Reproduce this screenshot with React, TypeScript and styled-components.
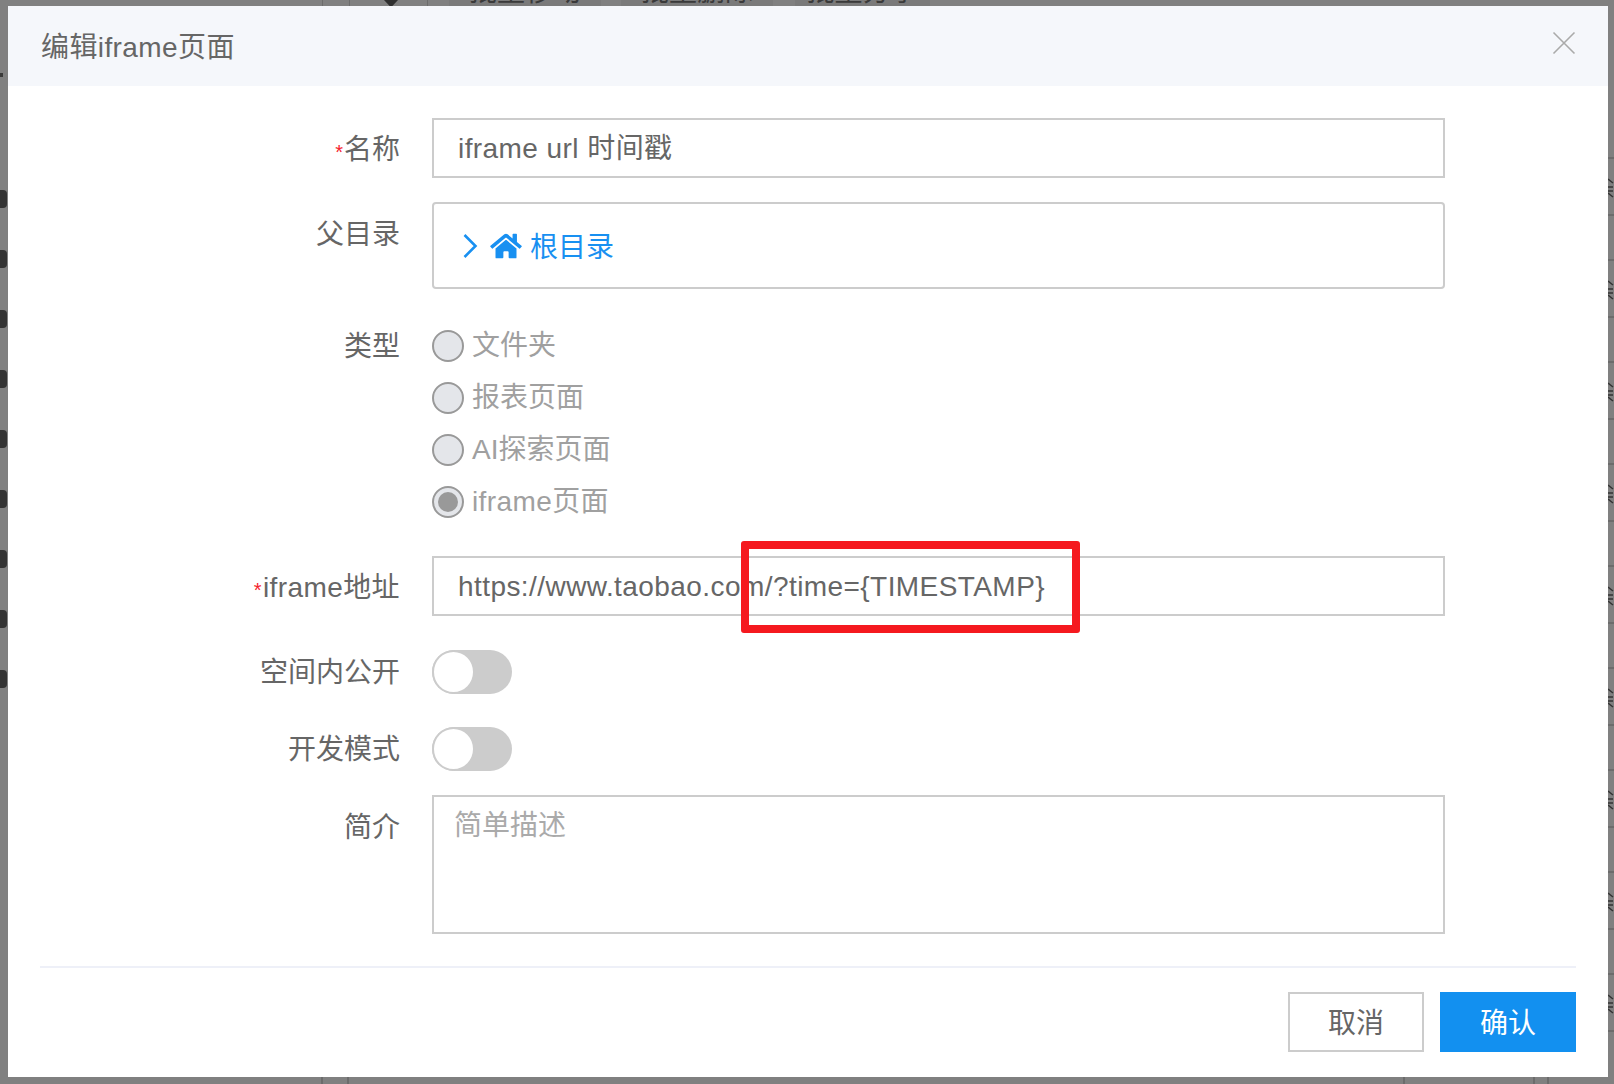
import styled, {createGlobalStyle} from 'styled-components'
import {FaHome} from 'react-icons/fa'

const GlobalStyle = createGlobalStyle`
    html, body {
        margin: 0;
        padding: 0;
        background: #808080;
    }
    * {
        box-sizing: border-box;
    }
    body {
        font-family: "Liberation Sans", "Noto Sans CJK SC", sans-serif;
        overflow: hidden;
    }
`

const types = [
    {label: '文件夹', checked: false},
    {label: '报表页面', checked: false},
    {label: 'AI探索页面', checked: false},
    {label: 'iframe页面', checked: true},
]

const handles = Array.from({length: 9})
const tableRows = Array.from({length: 9})

export default function App() {
    return (
        <Page>
            <GlobalStyle />
            <TopStrip>
                <TopCell $width={323} />
                <TopCell $width={27} />
                <SortCell />
                <ToolButton $left={21} $width={152}>批量移动</ToolButton>
                <ToolButton $left={20} $width={152}>批量删除</ToolButton>
                <ToolButton $left={22} $width={135}>批量分享</ToolButton>
            </TopStrip>
            <Middle>
                <LeftRail>
                    <Tick />
                    {handles.map((_, i) => (
                        <Handle key={i} />
                    ))}
                </LeftRail>
                <Modal>
                    <Header>
                        <Title>编辑iframe页面</Title>
                        <CloseButton aria-label="关闭">
                            <svg width="24" height="24" viewBox="0 0 24 24">
                                <path d="M1.5 1.5 L22.5 22.5 M22.5 1.5 L1.5 22.5" stroke="#aaaaaa" strokeWidth="1.6" fill="none" />
                            </svg>
                        </CloseButton>
                    </Header>
                    <Form>
                        <Row $top={32}>
                            <Label $height={60} $shift={2}><Star>*</Star>名称</Label>
                            <TextInput $up={4} defaultValue="iframe url 时间戳" />
                        </Row>
                        <Row $top={24}>
                            <Label $height={60} $shift={3}>父目录</Label>
                            <TreeBox>
                                <svg width="16" height="26" viewBox="0 0 16 26">
                                    <path d="M2.5 2 L13.5 13 L2.5 24" stroke="#1890f1" strokeWidth="2.6" fill="none" />
                                </svg>
                                <HomeIcon />
                                <TreeText>根目录</TreeText>
                            </TreeBox>
                        </Row>
                        <Row $top={41}>
                            <Label $height={32} $shift={1}>类型</Label>
                            <RadioGroup>
                                {types.map((type) => (
                                    <RadioRow key={type.label}>
                                        <Radio $checked={type.checked} />
                                        <RadioText $latin={type.checked}>{type.label}</RadioText>
                                    </RadioRow>
                                ))}
                            </RadioGroup>
                        </Row>
                        <Row $top={38}>
                            <Label $height={60} $shift={2} $latin><Star>*</Star>iframe地址</Label>
                            <TextInput $up={-2} defaultValue="https://www.taobao.com/?time={TIMESTAMP}" />
                        </Row>
                        <Row $top={34}>
                            <Label $height={44} $shift={1}>空间内公开</Label>
                            <Toggle><Knob /></Toggle>
                        </Row>
                        <Row $top={33}>
                            <Label $height={44} $shift={1}>开发模式</Label>
                            <Toggle><Knob /></Toggle>
                        </Row>
                        <Row $top={24}>
                            <Label $height={60} $shift={3}>简介</Label>
                            <DescInput placeholder="简单描述" />
                        </Row>
                    </Form>
                    <Divider />
                    <Footer>
                        <CancelButton>取消</CancelButton>
                        <ConfirmButton>确认</ConfirmButton>
                    </Footer>
                    <RedMark />
                </Modal>
                <RightRail>
                    {tableRows.map((_, i) => (
                        <TableRow key={i}>
                            <svg width="6" height="20" viewBox="0 0 6 20">
                                <path d="M0 1 L5 5 M0 9 H5 M0 13 H5 M0 15 L5 19" stroke="#333333" strokeWidth="1.5" fill="none" />
                            </svg>
                        </TableRow>
                    ))}
                </RightRail>
            </Middle>
            <BottomStrip>
                <BottomCell $width={323} />
                <BottomCell $width={26} />
                <BottomCell $width={1056} />
                <BottomCell $width={130} />
                <BottomCell $width={14} />
            </BottomStrip>
        </Page>
    )
}

const Page = styled.div`
    width: 1614px;
    height: 1084px;
    display: flex;
    flex-direction: column;
    background: #808080;
    overflow: hidden;
`

const TopStrip = styled.div`
    height: 6px;
    display: flex;
    overflow: hidden;
    flex-shrink: 0;
`

const TopCell = styled.div<{$width: number}>`
    width: ${({$width}) => $width}px;
    height: 6px;
    border-right: 1px solid #6c6c6c;
`

const SortCell = styled.div`
    width: 78px;
    height: 6px;
    border-right: 1px solid #6c6c6c;
    padding-left: 34px;

    &::before {
        content: '';
        display: block;
        width: 14px;
        height: 6px;
        background: #2f2f2f;
        clip-path: polygon(0 0, 100% 0, 60% 100%, 40% 100%);
    }
`

const ToolButton = styled.div<{$left: number; $width: number}>`
    width: ${({$width}) => $width}px;
    margin-left: ${({$left}) => $left}px;
    height: 6px;
    background: #7a7a7a;
    color: #3a3a3a;
    font-size: 28px;
    line-height: 28px;
    display: flex;
    justify-content: center;
    align-items: flex-end;
    white-space: nowrap;
`

const Middle = styled.div`
    height: 1071px;
    display: flex;
    flex-shrink: 0;
`

const LeftRail = styled.div`
    width: 8px;
    height: 100%;
    padding-top: 5px;
    display: flex;
    flex-direction: column;
`

const Tick = styled.div`
    width: 3px;
    height: 4px;
    margin-top: 62px;
    margin-bottom: 113px;
    background: #3a3a3a;
`

const Handle = styled.div`
    width: 7px;
    height: 18px;
    margin-bottom: 42px;
    background: #333333;
    border-radius: 0 4px 4px 0;
`

const Modal = styled.div`
    position: relative;
    width: 1600px;
    height: 100%;
    background: #ffffff;
    display: flex;
    flex-direction: column;
`

const Header = styled.div`
    height: 80px;
    background: #f5f7fb;
    padding: 0 33px;
    display: flex;
    align-items: center;
    justify-content: space-between;
    flex-shrink: 0;
`

const Title = styled.div`
    font-size: 28px;
    color: #666666;
    letter-spacing: 0.4px;
    margin-bottom: 2px;
`

const CloseButton = styled.button`
    border: none;
    background: none;
    padding: 0;
    width: 24px;
    height: 24px;
    margin-right: -1px;
    margin-top: -7px;
    cursor: pointer;
`

const Form = styled.div`
    display: flex;
    flex-direction: column;
`

const Row = styled.div<{$top: number}>`
    display: flex;
    align-items: flex-start;
    gap: 32px;
    margin-top: ${({$top}) => $top}px;
`

const Label = styled.div<{$height: number; $shift: number; $latin?: boolean}>`
    width: 392px;
    height: ${({$height}) => $height}px;
    line-height: ${({$height}) => $height}px;
    padding-top: ${({$shift}) => $shift}px;
    font-size: 28px;
    letter-spacing: ${({$latin}) => ($latin ? '0.4px' : '0')};
    color: #666666;
    text-align: right;
    flex-shrink: 0;
    white-space: nowrap;
`

const Star = styled.span`
    color: #f5222d;
    font-size: 20px;
    margin-right: 1px;
`

const TextInput = styled.input<{$up: number}>`
    width: 1013px;
    height: 60px;
    border: 2px solid #cccccc;
    border-radius: 0;
    padding: ${({$up}) => ($up < 0 ? -$up : 0)}px 24px ${({$up}) => ($up > 0 ? $up : 0)}px;
    font-family: inherit;
    font-size: 28px;
    letter-spacing: 0.43px;
    color: #666666;
    outline: none;
`

const TreeBox = styled.div`
    width: 1013px;
    height: 87px;
    border: 2px solid #cccccc;
    border-radius: 4px;
    padding: 0 0 0 28px;
    display: flex;
    align-items: center;
`

const HomeIcon = styled(FaHome)`
    width: 32px;
    height: 28px;
    margin-left: 12px;
    color: #1890f1;
`

const TreeText = styled.span`
    margin-left: 8px;
    margin-bottom: 2px;
    font-size: 28px;
    color: #1890f1;
`

const RadioGroup = styled.div`
    display: flex;
    flex-direction: column;
    gap: 20px;
`

const RadioRow = styled.div`
    display: flex;
    align-items: center;
    gap: 8px;
    height: 32px;
`

const Radio = styled.span<{$checked: boolean}>`
    width: 32px;
    height: 32px;
    border-radius: 50%;
    border: 2px solid #999999;
    background: #e4e6ea;
    display: flex;
    align-items: center;
    justify-content: center;

    &::after {
        content: '';
        display: ${({$checked}) => ($checked ? 'block' : 'none')};
        width: 20px;
        height: 20px;
        border-radius: 50%;
        background: #999999;
    }
`

const RadioText = styled.span<{$latin: boolean}>`
    font-size: 28px;
    line-height: 32px;
    letter-spacing: ${({$latin}) => ($latin ? '0.4px' : '0')};
    color: #a0a0a0;
`

const Toggle = styled.div`
    width: 80px;
    height: 44px;
    border-radius: 22px;
    background: #cccccc;
`

const Knob = styled.div`
    width: 43px;
    height: 44px;
    border-radius: 50%;
    background: #ffffff;
    border: 2px solid #cccccc;
`

const DescInput = styled.textarea`
    width: 1013px;
    height: 139px;
    border: 2px solid #cccccc;
    border-radius: 0;
    padding: 13px 20px;
    font-family: inherit;
    font-size: 28px;
    line-height: 32px;
    color: #666666;
    outline: none;
    resize: none;

    &::placeholder {
        color: #aaaaaa;
    }
`

const Divider = styled.div`
    height: 2px;
    margin: 32px 32px 0;
    background: #eef0f8;
    flex-shrink: 0;
`

const Footer = styled.div`
    display: flex;
    justify-content: flex-end;
    gap: 16px;
    margin-top: 24px;
    padding-right: 32px;
`

const CancelButton = styled.button`
    width: 136px;
    height: 60px;
    border: 2px solid #cccccc;
    background: #ffffff;
    padding: 0 0 2px;
    font-family: inherit;
    font-size: 28px;
    color: #666666;
    cursor: pointer;
`

const ConfirmButton = styled.button`
    width: 136px;
    height: 60px;
    border: none;
    background: #1290f0;
    padding: 0 0 2px;
    font-family: inherit;
    font-size: 28px;
    color: #ffffff;
    cursor: pointer;
`

// annotation drawn on top of the dialog
const RedMark = styled.div`
    position: absolute;
    left: 733px;
    top: 535px;
    width: 339px;
    height: 92px;
    border: 8px solid #f5191f;
    border-radius: 3px;
`

const RightRail = styled.div`
    width: 6px;
    height: 100%;
    padding-top: 151px;
    display: flex;
    flex-direction: column;
    overflow: hidden;
`

const TableRow = styled.div`
    height: 102px;
    flex-shrink: 0;
    border-top: 2px solid #6c6c6c;
    padding-top: 19px;
    background: linear-gradient(#6c6c6c, #6c6c6c) 0 55px / 100% 2px no-repeat;

    svg {
        display: block;
    }
`

const BottomStrip = styled.div`
    height: 7px;
    display: flex;
    flex-shrink: 0;
`

const BottomCell = styled.div<{$width: number}>`
    width: ${({$width}) => $width}px;
    height: 7px;
    border-right: 2px solid #6c6c6c;
`
